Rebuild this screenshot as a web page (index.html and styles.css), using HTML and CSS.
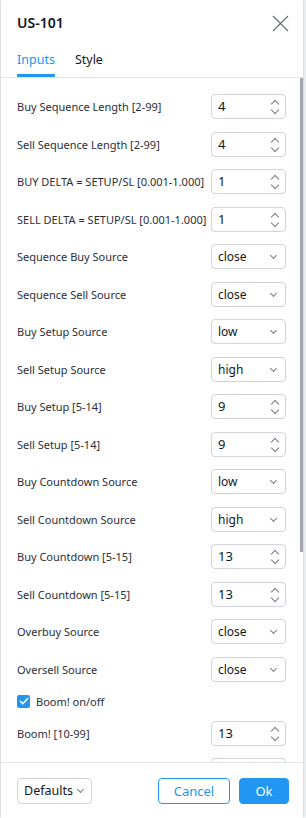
FILE: index.html
```html
<!DOCTYPE html>
<html lang="en">
<head>
    <meta charset="UTF-8">
    <meta name="viewport" content="width=device-width, initial-scale=1.0">
    <title>US-101</title>
    <link rel="stylesheet" href="styles.css">
</head>
<body>
    <div class="dialog">
      <div class="header">
        <span class="title">US-101</span>
        <button class="close" aria-label="Close">
          <svg width="17" height="17" viewBox="0 0 17 17"><path d="M1 1L16 16M16 1L1 16" stroke="#6a6d78" stroke-width="1.2" fill="none"/></svg>
        </button>
      </div>

      <div class="tabs">
        <span class="tab active">Inputs</span>
        <span class="tab">Style</span>
      </div>

      <div class="content">
        <div class="row"><span class="label">Buy Sequence Length [2-99]</span><div class="field spin">4</div></div>
        <div class="row"><span class="label">Sell Sequence Length [2-99]</span><div class="field spin">4</div></div>
        <div class="row"><span class="label">BUY DELTA = SETUP/SL [0.001-1.000]</span><div class="field spin">1</div></div>
        <div class="row"><span class="label">SELL DELTA = SETUP/SL [0.001-1.000]</span><div class="field spin">1</div></div>
        <div class="row"><span class="label">Sequence Buy Source</span><div class="field select">close</div></div>
        <div class="row"><span class="label">Sequence Sell Source</span><div class="field select">close</div></div>
        <div class="row"><span class="label">Buy Setup Source</span><div class="field select">low</div></div>
        <div class="row"><span class="label">Sell Setup Source</span><div class="field select">high</div></div>
        <div class="row"><span class="label">Buy Setup [5-14]</span><div class="field spin">9</div></div>
        <div class="row"><span class="label">Sell Setup [5-14]</span><div class="field spin">9</div></div>
        <div class="row"><span class="label">Buy Countdown Source</span><div class="field select">low</div></div>
        <div class="row"><span class="label">Sell Countdown Source</span><div class="field select">high</div></div>
        <div class="row"><span class="label">Buy Countdown [5-15]</span><div class="field spin">13</div></div>
        <div class="row"><span class="label">Sell Countdown [5-15]</span><div class="field spin">13</div></div>
        <div class="row"><span class="label">Overbuy Source</span><div class="field select">close</div></div>
        <div class="row"><span class="label">Oversell Source</span><div class="field select">close</div></div>
        <label class="check-row"><span class="checkbox"><svg width="10" height="8" viewBox="0 0 10 8"><path d="M1 4L3.8 6.6L9 1.2" stroke="#fff" stroke-width="1.6" fill="none"/></svg></span>Boom! on/off</label>
        <div class="row"><span class="label">Boom! [10-99]</span><div class="field spin">13</div></div>
        <div class="row"><span class="label"></span><div class="field spin"></div></div>
      </div>

      <div class="footer">
        <div class="defaults">Defaults</div>
        <div class="actions">
          <button class="btn cancel">Cancel</button>
          <button class="btn ok">Ok</button>
        </div>
      </div>

      <span class="scroll-thumb"></span>
    </div>
</body>
</html>
```

FILE: styles.css
```css
body {
  margin: 0;
  background: #f4f5f7;
  font-family: "Noto Sans", Arial, sans-serif;
  color: #131722;
}
.dialog {
  position: relative;
  width: 302px;
  height: 818px;
  margin-left: 1px;
  background: #fff;
  display: flex;
  flex-direction: column;
  box-shadow: 0 0 3px rgba(0, 0, 0, 0.25);
}
.header {
  height: 44px;
  flex: none;
  display: flex;
  align-items: center;
  justify-content: space-between;
  padding: 0 14px 0 16px;
}
.title {
  font-size: 14px;
  font-weight: 600;
  padding-top: 1px;
}
.close {
  border: 0;
  background: none;
  padding: 0;
  width: 17px;
  height: 17px;
  margin-top: 2px;
}
.tabs {
  height: 33px;
  flex: none;
  display: flex;
  gap: 20px;
  padding: 0 16px;
  border-bottom: 1px solid #e0e3eb;
}
.tab {
  font-size: 12.5px;
  line-height: 32px;
  color: #131722;
}
.tab.active {
  color: #2196f3;
  border-bottom: 3px solid #2196f3;
  border-radius: 0 0 1px 1px;
  height: 30px;
}
.content {
  flex: 1;
  overflow: hidden;
  padding: 16px 17px 0 16px;
  display: flex;
  flex-direction: column;
  gap: 12.5px;
}
.row {
  flex: none;
  height: 25px;
  display: flex;
  align-items: center;
  justify-content: space-between;
}
.label {
  font-size: 11px;
  color: #2a2e39;
}
.field {
  width: 75px;
  height: 25px;
  box-sizing: border-box;
  border: 1px solid #d1d4dc;
  border-radius: 4px;
  padding-left: 6px;
  font-size: 13px;
  line-height: 23px;
  position: relative;
}
.field.select {
  font-size: 12px;
}
.spin::before,
.spin::after {
  content: "";
  position: absolute;
  right: 7px;
  width: 5px;
  height: 5px;
  border-left: 1px solid #787b86;
  border-top: 1px solid #787b86;
}
.spin::before {
  top: 6px;
  transform: rotate(45deg);
}
.spin::after {
  top: 12px;
  transform: rotate(225deg);
}
.select::after {
  content: "";
  position: absolute;
  right: 9px;
  top: 8px;
  width: 4px;
  height: 4px;
  border-right: 1px solid #787b86;
  border-bottom: 1px solid #787b86;
  transform: rotate(45deg);
}
.check-row {
  flex: none;
  height: 14px;
  display: flex;
  align-items: center;
  gap: 6px;
  font-size: 11px;
  color: #2a2e39;
}
.checkbox {
  width: 13px;
  height: 13px;
  border-radius: 2px;
  background: #2196f3;
  display: flex;
  align-items: center;
  justify-content: center;
}
.footer {
  flex: none;
  height: 55px;
  border-top: 1px solid #e0e3eb;
  display: flex;
  align-items: center;
  justify-content: space-between;
  padding: 0 14px 0 16px;
  background: #fff;
}
.defaults {
  width: 75px;
  height: 26px;
  box-sizing: border-box;
  border: 1px solid #d1d4dc;
  border-radius: 4px;
  padding-left: 6px;
  font-size: 12.5px;
  line-height: 24px;
  position: relative;
}
.defaults::after {
  content: "";
  position: absolute;
  right: 8px;
  top: 8px;
  width: 4px;
  height: 4px;
  border-right: 1px solid #787b86;
  border-bottom: 1px solid #787b86;
  transform: rotate(45deg);
}
.actions {
  display: flex;
  gap: 9px;
}
.btn {
  height: 26px;
  border-radius: 4px;
  font-family: "Noto Sans", Arial, sans-serif;
  font-size: 13px;
  cursor: pointer;
}
.cancel {
  width: 72px;
  background: #fff;
  border: 1px solid #2196f3;
  color: #2196f3;
}
.ok {
  width: 50px;
  background: #2196f3;
  border: 1px solid #2196f3;
  color: #fff;
}
.scroll-thumb {
  position: absolute;
  right: 0;
  top: 78px;
  width: 3px;
  height: 474px;
  background: #a3a6af;
}
```
